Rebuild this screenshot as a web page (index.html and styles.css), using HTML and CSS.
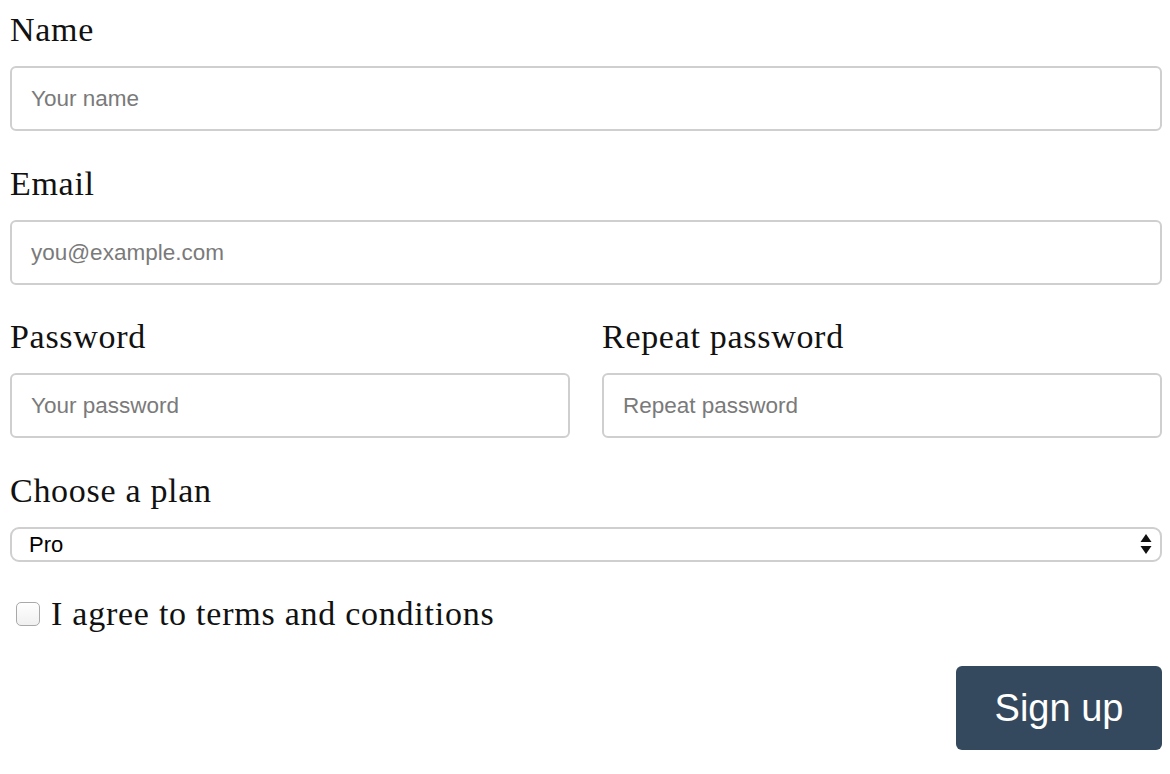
FILE: index.html
```html
<!DOCTYPE html>
<html lang="en">
<head>
    <meta charset="UTF-8">
    <meta name="viewport" content="width=device-width, initial-scale=1.0">
    <title>Sign up</title>
    <link rel="stylesheet" href="styles.css">
</head>
<body>
    <form class="signup">
        <div class="field">
            <label class="label" for="name">Name</label>
            <input class="input" id="name" type="text" placeholder="Your name">
        </div>
        <div class="field">
            <label class="label" for="email">Email</label>
            <input class="input" id="email" type="email" placeholder="you@example.com">
        </div>
        <div class="row">
            <div class="field">
                <label class="label" for="pass">Password</label>
                <input class="input" id="pass" type="password" placeholder="Your password">
            </div>
            <div class="field">
                <label class="label" for="pass2">Repeat password</label>
                <input class="input" id="pass2" type="password" placeholder="Repeat password">
            </div>
        </div>
        <div class="field">
            <label class="label" for="plan">Choose a plan</label>
            <div class="select-wrap">
                <select class="select" id="plan">
                    <option>Free</option>
                    <option selected>Pro</option>
                    <option>Business</option>
                </select>
                <svg class="select-arrows" width="12" height="22" viewBox="0 0 12 22">
                    <path d="M6 1 L11.5 9 L0.5 9 Z" fill="#111"/>
                    <path d="M6 21 L11.5 13 L0.5 13 Z" fill="#111"/>
                </svg>
            </div>
        </div>
        <label class="check">
            <input class="checkbox" type="checkbox">
            <span>I agree to terms and conditions</span>
        </label>
        <div class="actions">
            <button class="button" type="submit">Sign up</button>
        </div>
    </form>
</body>
</html>
```

FILE: styles.css
```css
body {
    margin: 0;
    background: #fff;
    font-family: "Liberation Serif", "Times New Roman", serif;
    color: #111;
}
.signup {
    padding: 10px 8px 0 10px;
    display: flex;
    flex-direction: column;
    gap: 32px;
}
.field {
    display: flex;
    flex-direction: column;
}
.field:first-child {
    margin-bottom: 1px;
}
.label {
    font-size: 34px;
    line-height: 40px;
    letter-spacing: 0.7px;
    margin-bottom: 16px;
}
.row {
    display: grid;
    grid-template-columns: 1fr 1fr;
    gap: 32px;
}
.input {
    box-sizing: border-box;
    height: 65px;
    padding: 0 19px;
    border: 2px solid #cfcfcf;
    border-radius: 6px;
    font-family: "Liberation Sans", Arial, sans-serif;
    font-size: 22.5px;
    color: #111;
    outline: none;
}
.input::placeholder {
    color: #7a7a7a;
}
.select-wrap {
    position: relative;
}
.select {
    box-sizing: border-box;
    width: 100%;
    height: 35px;
    padding: 0 17px;
    border: 2px solid #cfcfcf;
    border-radius: 9px;
    background: #fff;
    font-family: "Liberation Sans", Arial, sans-serif;
    font-size: 22px;
    color: #000;
    appearance: none;
    -webkit-appearance: none;
    outline: none;
}
.select-arrows {
    position: absolute;
    right: 10px;
    top: 6px;
    pointer-events: none;
}
.check {
    display: flex;
    align-items: center;
    gap: 11px;
    padding-left: 6px;
    font-size: 34px;
    line-height: 40px;
    letter-spacing: 0.75px;
}
.checkbox {
    appearance: none;
    -webkit-appearance: none;
    margin: 0;
    width: 24px;
    height: 24px;
    border: 1.5px solid #a9a9a9;
    border-radius: 5px;
    background: linear-gradient(#fff, #f0f0f0);
}
.actions {
    display: flex;
    justify-content: flex-end;
}
.button {
    width: 206px;
    height: 84px;
    border: none;
    border-radius: 6px;
    background: #34495e;
    color: #fff;
    font-family: "Liberation Sans", Arial, sans-serif;
    font-size: 38px;
    cursor: pointer;
}
```
